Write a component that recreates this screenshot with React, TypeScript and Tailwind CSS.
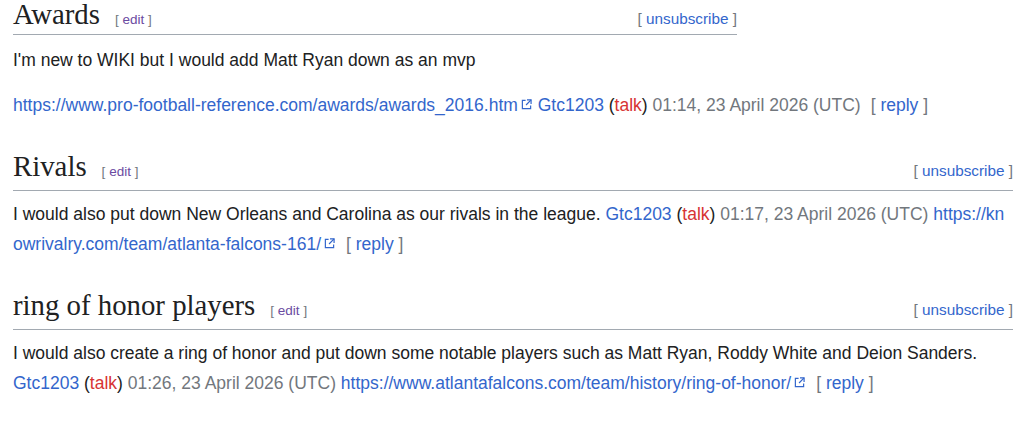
import React from "react";

function ExtIcon() {
  return (
    <svg
      width="11"
      height="11"
      viewBox="0 0 12 12"
      className="inline-block ml-[3px] mr-[1px] align-[1px]"
      fill="none"
      stroke="#3366cc"
      strokeWidth="1.3"
    >
      <path d="M5 1.5H1.5v9h9V7" />
      <path d="M6.5 1h4.5v4.5" />
      <path d="M11 1L5.5 6.5" />
    </svg>
  );
}

function Reply() {
  return (
    <span className="ml-[10px] text-[#72777d]">
      [ <a className="text-[#3366cc]">reply</a> ]
    </span>
  );
}

function Sig({ time }: { time: string }) {
  return (
    <>
      <a className="text-[#3366cc]">Gtc1203</a>{" "}
      <span>(</span>
      <a className="text-[#d73333]">talk</a>
      <span>)</span>{" "}
      <span className="text-[#72777d]">{time}, 23 April 2026 (UTC)</span>
    </>
  );
}

function Heading({ title, first }: { title: string; first?: boolean }) {
  return (
    <div
      className={`flex items-baseline justify-between border-b border-[#a2a9b1] ${
        first ? "w-[724px] pb-[6px]" : "pb-[8px]"
      }`}
    >
      <div className="flex items-baseline">
        <h2
          className={`font-['Liberation_Serif',serif] text-[28.8px] text-[#202122] ${
            first ? "leading-[28px]" : "leading-[32px]"
          }`}
        >
          {title}
        </h2>
        <span className="ml-[15px] text-[13.5px] leading-none text-[#72777d]">
          [ <a className="text-[#6b4ba1]">edit</a> ]
        </span>
      </div>
      <span className="text-[15.3px] leading-none text-[#72777d]">
        [ <a className="text-[#3366cc]">unsubscribe</a> ]
      </span>
    </div>
  );
}

export default function App() {
  return (
    <div className="w-[1023px] h-[429px] overflow-hidden bg-white pl-[13px] pr-[10px] font-['Liberation_Sans',Arial,sans-serif] text-[17.5px] leading-[30px] text-[#202122]">
      <section>
        <Heading title="Awards" first />
        <p className="mt-[10px]">I'm new to WIKI but I would add Matt Ryan down as an mvp</p>
        <p className="mt-[15px]">
          <a className="text-[#3366cc]">https://www.pro-football-reference.com/awards/awards_2016.htm</a>
          <ExtIcon /> <Sig time="01:14" />
          <Reply />
        </p>
      </section>
      <section className="mt-[30px]">
        <Heading title="Rivals" />
        <p className="mt-[8px]">
          I would also put down New Orleans and Carolina as our rivals in the league.{" "}
          <Sig time="01:17" />{" "}
          <a className="text-[#3366cc] break-all">https://knowrivalry.com/team/atlanta-falcons-161/</a>
          <ExtIcon />
          <Reply />
        </p>
      </section>
      <section className="mt-[30px]">
        <Heading title="ring of honor players" />
        <p className="mt-[8px]">
          I would also create a ring of honor and put down some notable players such as Matt Ryan, Roddy
          White and Deion Sanders. <Sig time="01:26" />{" "}
          <a className="text-[#3366cc]">https://www.atlantafalcons.com/team/history/ring-of-honor/</a>
          <ExtIcon />
          <Reply />
        </p>
      </section>
    </div>
  );
}
